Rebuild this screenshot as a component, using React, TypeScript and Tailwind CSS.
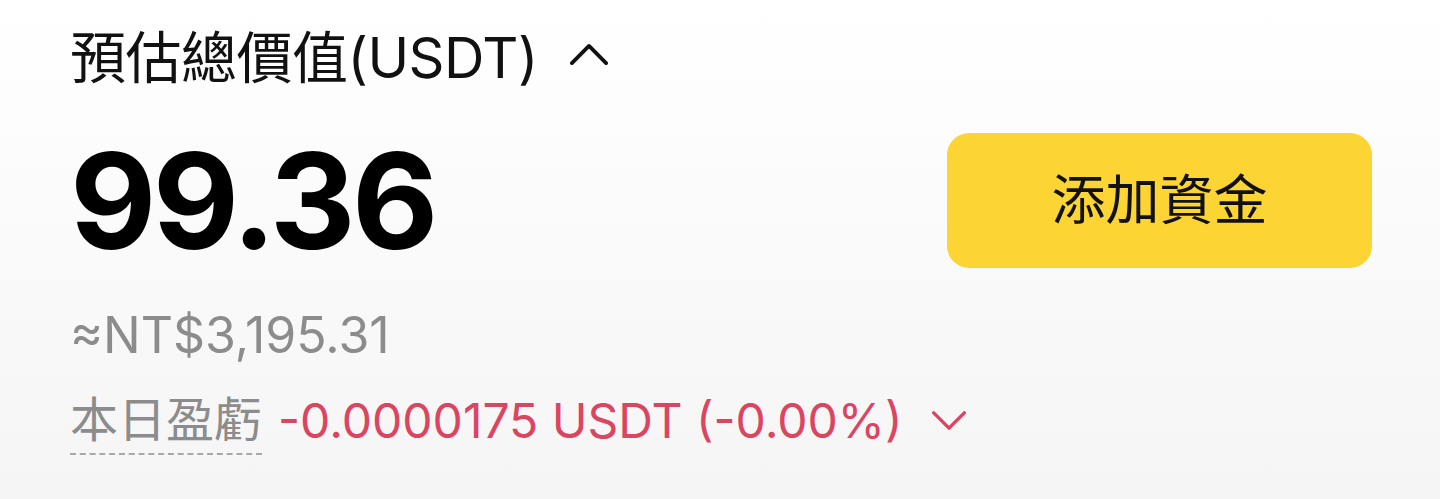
const CJK = "font-['Inter','Noto_Sans_CJK_TC',sans-serif]";

const Caret = ({ down, className }: { down?: boolean; className?: string }) => (
  <svg viewBox="0 0 40 24" className={className} fill="none" stroke="currentColor" strokeWidth={4} strokeLinecap="round" strokeLinejoin="round">
    {down ? <path d="M2 3 L20 21 L38 3" /> : <path d="M2 21 L20 3 L38 21" />}
  </svg>
);

export default function App() {
  return (
    <div className={`h-[499px] w-full bg-gradient-to-b from-white to-[#f5f5f5] px-[70px] pr-[68px] ${CJK}`}>
      {/* 標題 */}
      <div className="flex items-center pt-[22px] h-[94px]">
        <span className="text-[56px] leading-none text-[#111] tracking-[-0.5px]">預估總價值(USDT)</span>
        <Caret className="ml-[32px] mb-[8px] w-[38px] h-[23px] text-[#111]" />
      </div>

      {/* 總額 + 按鈕 */}
      <div className="flex items-center justify-between mt-[39px]">
        <span className="text-[133px] font-bold leading-none text-black tracking-[-3.5px]">99.36</span>
        <button className="w-[425px] h-[135px] rounded-[22px] bg-[#fcd535] text-[54px] text-[#111]">
          添加資金
        </button>
      </div>

      {/* 台幣估值 */}
      <div className="mt-[42px] text-[50px] leading-none text-[#8c8c8c]">≈NT$3,195.31</div>

      {/* 本日盈虧 */}
      <div className="mt-[36px] flex items-center">
        <span className="text-[48px] leading-none text-[#8c8c8c] border-b-2 border-dashed border-[#a8a8a8] pb-[9px]">本日盈虧</span>
        <span className="ml-[16px] mb-[10px] text-[48px] leading-none text-[#dc4560]">-0.0000175 USDT (-0.00%)</span>
        <Caret down className="ml-[30px] mb-[10px] w-[34px] h-[21px] text-[#dc4560]" />
      </div>
    </div>
  );
}
